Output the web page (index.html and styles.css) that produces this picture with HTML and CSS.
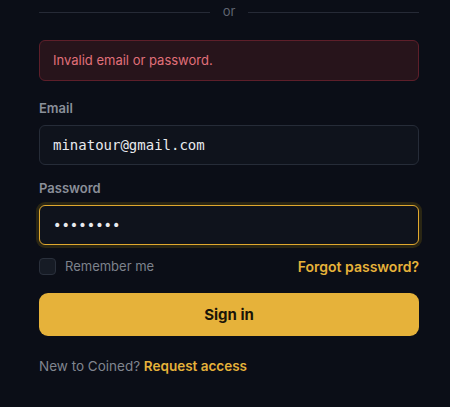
FILE: index.html
```html
<!DOCTYPE html>
<html lang="en">
<head>
<meta charset="utf-8">
<link rel="stylesheet" href="styles.css">
</head>
<body>
<div class="wrap">
  <div class="divider"><span class="line"></span><span class="or">or</span><span class="line"></span></div>
  <div class="error">Invalid email or password.</div>
  <form class="form">
    <label class="label" for="email">Email</label>
    <input class="input" id="email" type="text" value="minatour@gmail.com">
    <label class="label label-pw" for="pw">Password</label>
    <input class="input input-focus" id="pw" type="password" value="12345678">
    <div class="row">
      <label class="remember"><span class="check"></span>Remember me</label>
      <a class="forgot" href="#">Forgot password?</a>
    </div>
    <button class="btn" type="button">Sign in</button>
  </form>
  <p class="footer">New to Coined? <a class="link" href="#">Request access</a></p>
</div>
</body>
</html>
```

FILE: styles.css
```css
html, body {
  margin: 0;
  padding: 0;
  background: #0b0e17;
}
body {
  font-family: Inter, "Noto Sans", sans-serif;
  color: #e5e7eb;
}
.wrap {
  width: 380px;
  padding-left: 39px;
}
.divider {
  display: flex;
  align-items: center;
  height: 24px;
  gap: 13px;
}
.line {
  flex: 1;
  height: 1px;
  background: #262a36;
}
.or {
  font-size: 13px;
  color: #5f6470;
  line-height: 16px;
  margin-top: -2px;
}
.error {
  margin-top: 16px;
  border: 1px solid #5e1f2a;
  background: #27141b;
  border-radius: 6px;
  padding: 12px 13px;
  font-size: 13px;
  line-height: 15px;
  color: #e0707a;
}
.form {
  display: flex;
  flex-direction: column;
  margin: 0;
}
.label {
  margin-top: 18px;
  margin-bottom: 8px;
  font-size: 13px;
  line-height: 18px;
  font-weight: 600;
  color: #8a8f99;
}
.label-pw {
  margin-top: 14px;
}
.input {
  box-sizing: border-box;
  height: 40px;
  width: 100%;
  border: 1px solid #262c38;
  border-radius: 6px;
  background: #0f131c;
  padding: 0 13px;
  font-family: "DejaVu Sans Mono", monospace;
  font-size: 14px;
  color: #e8eaee;
  outline: none;
}
.input-focus {
  border-color: #e0a82e;
  box-shadow: 0 0 0 3px #2a2614;
}
.row {
  display: flex;
  align-items: center;
  justify-content: space-between;
  margin-top: 12px;
  height: 18px;
}
.remember {
  display: flex;
  align-items: center;
  gap: 9px;
  font-size: 13px;
  color: #7d828c;
}
.check {
  box-sizing: border-box;
  width: 17px;
  height: 17px;
  border: 1px solid #2a303c;
  border-radius: 4px;
  background: #161b25;
}
.forgot {
  font-size: 14px;
  font-weight: 600;
  color: #e6b23a;
  text-decoration: none;
}
.btn {
  margin-top: 18px;
  height: 43px;
  border: none;
  border-radius: 9px;
  background: #e6b23a;
  color: #1a1408;
  font-family: Inter, sans-serif;
  font-size: 15px;
  font-weight: 700;
  cursor: pointer;
}
.footer {
  margin: 21px 0 0;
  font-size: 13.5px;
  line-height: 18px;
  color: #80858f;
}
.link {
  color: #e6b23a;
  font-weight: 600;
  text-decoration: none;
}
```
